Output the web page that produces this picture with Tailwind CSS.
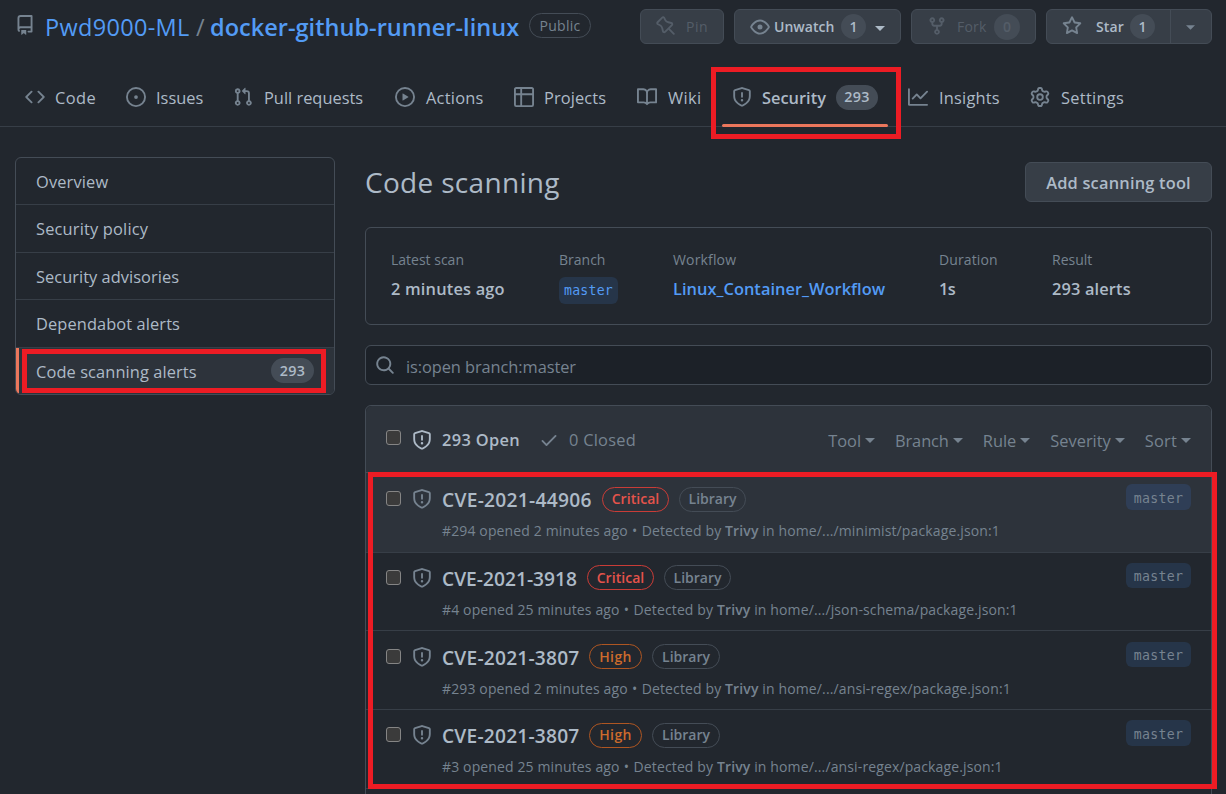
<!DOCTYPE html>
<html lang="en">
<head>
<meta charset="utf-8">
<title>Code scanning alerts</title>
<script src="https://cdn.jsdelivr.net/npm/@tailwindcss/browser@4"></script>
</head>
<body class="relative h-[794px] w-[1226px] overflow-hidden bg-[#22272e] font-['Open_Sans','Noto_Sans',sans-serif] text-[16.4px] leading-[24px] text-[#adbac7]">
<svg class="hidden">
  <symbol id="repo" viewBox="0 0 16 16"><path fill-rule="evenodd" d="M2 2.5A2.5 2.5 0 014.5 0h8.75a.75.75 0 01.75.75v12.5a.75.75 0 01-.75.75h-2.5a.75.75 0 110-1.5h1.75v-2h-8a1 1 0 00-.714 1.7.75.75 0 01-1.072 1.05A2.495 2.495 0 012 11.5v-9zm10.5-1V9h-8c-.356 0-.694.074-1 .208V2.5a1 1 0 011-1h8zM5 12.25v3.25a.25.25 0 00.4.2l1.45-1.087a.25.25 0 01.3 0L8.6 15.7a.25.25 0 00.4-.2v-3.25a.25.25 0 00-.25-.25h-3.5a.25.25 0 00-.25.25z"/></symbol>
  <symbol id="code" viewBox="0 0 16 16"><path fill-rule="evenodd" d="M4.72 3.22a.75.75 0 011.06 1.06L2.06 8l3.72 3.72a.75.75 0 11-1.06 1.06L.47 8.53a.75.75 0 010-1.06l4.25-4.25zm6.56 0a.75.75 0 10-1.06 1.06L13.94 8l-3.72 3.72a.75.75 0 101.06 1.06l4.25-4.25a.75.75 0 000-1.06l-4.25-4.25z"/></symbol>
  <symbol id="issue" viewBox="0 0 16 16"><path d="M8 9.5a1.5 1.5 0 100-3 1.5 1.5 0 000 3z"/><path fill-rule="evenodd" d="M8 0a8 8 0 100 16A8 8 0 008 0zM1.5 8a6.5 6.5 0 1113 0 6.5 6.5 0 01-13 0z"/></symbol>
  <symbol id="pr" viewBox="0 0 16 16"><path fill-rule="evenodd" d="M7.177 3.073L9.573.677A.25.25 0 0110 .854v4.792a.25.25 0 01-.427.177L7.177 3.427a.25.25 0 010-.354zM3.75 2.5a.75.75 0 100 1.5.75.75 0 000-1.5zm-2.25.75a2.25 2.25 0 113 2.122v5.256a2.251 2.251 0 11-1.5 0V5.372A2.25 2.25 0 011.5 3.25zM11 2.5h-1V4h1a1 1 0 011 1v5.628a2.251 2.251 0 101.5 0V5A2.5 2.5 0 0011 2.5zm1 10.25a.75.75 0 111.5 0 .75.75 0 01-1.5 0zM3.75 12a.75.75 0 100 1.5.75.75 0 000-1.5z"/></symbol>
  <symbol id="play" viewBox="0 0 16 16"><path fill-rule="evenodd" d="M1.5 8a6.5 6.5 0 1113 0 6.5 6.5 0 01-13 0zM8 0a8 8 0 100 16A8 8 0 008 0zM6.379 5.227A.25.25 0 006 5.442v5.117a.25.25 0 00.379.214l4.264-2.559a.25.25 0 000-.428L6.379 5.227z"/></symbol>
  <symbol id="table" viewBox="0 0 16 16"><path fill-rule="evenodd" d="M0 1.75C0 .784.784 0 1.75 0h12.5C15.216 0 16 .784 16 1.75v12.5A1.75 1.75 0 0114.25 16H1.75A1.75 1.75 0 010 14.25V1.75zM1.5 6.5v7.75c0 .138.112.25.25.25H5v-8H1.5zM5 5H1.5V1.75a.25.25 0 01.25-.25H5V5zm1.5 1.5v8h7.75a.25.25 0 00.25-.25V6.5h-8zm8-1.5h-8V1.5h7.75a.25.25 0 01.25.25V5z"/></symbol>
  <symbol id="book" viewBox="0 0 16 16"><path fill-rule="evenodd" d="M0 1.75A.75.75 0 01.75 1h4.253c1.227 0 2.317.59 3 1.501A3.744 3.744 0 0111.006 1h4.245a.75.75 0 01.75.75v10.5a.75.75 0 01-.75.75h-4.507a2.25 2.25 0 00-1.591.659l-.622.621a.75.75 0 01-1.06 0l-.622-.621A2.25 2.25 0 005.258 13H.75a.75.75 0 01-.75-.75V1.75zm8.755 3a2.25 2.25 0 012.25-2.25H14.5v9h-3.757c-.71 0-1.4.201-1.992.572l.004-7.322zm-1.504 7.324l.004-5.073-.002-2.253A2.25 2.25 0 005.003 2.5H1.5v9h3.757a3.75 3.75 0 011.994.574z"/></symbol>
  <symbol id="shield" viewBox="0 0 16 16"><path fill-rule="evenodd" d="M7.467.133a1.75 1.75 0 011.066 0l5.25 1.68A1.75 1.75 0 0115 3.48V7c0 1.566-.32 3.182-1.303 4.682-.983 1.498-2.585 2.813-5.032 3.855a1.7 1.7 0 01-1.33 0c-2.447-1.042-4.049-2.357-5.032-3.855C1.32 10.182 1 8.566 1 7V3.48a1.75 1.75 0 011.217-1.667l5.25-1.68zm.61 1.429a.25.25 0 00-.153 0l-5.25 1.68a.25.25 0 00-.174.238V7c0 1.358.275 2.666 1.057 3.86.784 1.194 2.121 2.34 4.366 3.297a.2.2 0 00.154 0c2.245-.956 3.582-2.104 4.366-3.298C13.225 9.666 13.5 8.36 13.5 7V3.48a.25.25 0 00-.174-.237l-5.25-1.68zM9 10.5a1 1 0 11-2 0 1 1 0 012 0zm-.25-5.75a.75.75 0 10-1.5 0v3a.75.75 0 001.5 0v-3z"/></symbol>
  <symbol id="graph" viewBox="0 0 16 16"><path fill-rule="evenodd" d="M1.5 1.75a.75.75 0 00-1.5 0v12.5c0 .414.336.75.75.75h14.5a.75.75 0 000-1.5H1.5V1.75zm14.28 2.53a.75.75 0 00-1.06-1.06L10 7.94 7.53 5.47a.75.75 0 00-1.06 0L3.22 8.72a.75.75 0 001.06 1.06L7 7.06l2.47 2.47a.75.75 0 001.06 0l5.25-5.25z"/></symbol>
  <symbol id="gear" viewBox="0 0 16 16"><path fill-rule="evenodd" d="M7.429 1.525a6.593 6.593 0 011.142 0c.036.003.108.036.137.146l.289 1.105c.147.56.55.967.997 1.189.174.086.341.183.501.29.417.278.97.423 1.53.27l1.102-.303c.11-.03.175.016.195.046.219.31.41.641.573.989.014.031.022.11-.059.19l-.815.806c-.411.406-.562.957-.53 1.456a4.588 4.588 0 010 .582c-.032.499.119 1.05.53 1.456l.815.806c.08.08.073.159.059.19a6.494 6.494 0 01-.573.99c-.02.029-.086.074-.195.045l-1.103-.303c-.559-.153-1.112-.008-1.529.27-.16.107-.327.204-.5.29-.449.222-.851.628-.998 1.189l-.289 1.105c-.029.11-.101.143-.137.146a6.613 6.613 0 01-1.142 0c-.036-.003-.108-.037-.137-.146l-.289-1.105c-.147-.56-.55-.967-.997-1.189a4.502 4.502 0 01-.501-.29c-.417-.278-.97-.423-1.53-.27l-1.102.303c-.11.03-.175-.016-.195-.046a6.492 6.492 0 01-.573-.989c-.014-.031-.022-.11.059-.19l.815-.806c.411-.406.562-.957.53-1.456a4.587 4.587 0 010-.582c.032-.499-.119-1.05-.53-1.456l-.815-.806c-.08-.08-.073-.159-.059-.19a6.44 6.44 0 01.573-.99c.02-.029.086-.075.195-.045l1.103.303c.559.153 1.112.008 1.529-.27.16-.107.327-.204.5-.29.449-.222.851-.628.998-1.189l.289-1.105c.029-.11.101-.143.137-.146zM8 0c-.236 0-.47.01-.701.03-.743.065-1.29.615-1.458 1.261l-.29 1.106c-.017.066-.078.158-.211.224a5.994 5.994 0 00-.668.386c-.123.082-.233.09-.3.071L3.27 2.776c-.644-.177-1.392.02-1.82.63a7.977 7.977 0 00-.704 1.217c-.315.675-.111 1.422.363 1.891l.815.806c.05.048.098.147.088.294a6.084 6.084 0 000 .772c.01.147-.038.246-.088.294l-.815.806c-.474.469-.678 1.216-.363 1.891.2.428.436.835.704 1.218.428.609 1.176.806 1.82.63l1.103-.303c.066-.019.176-.011.299.071.213.143.436.272.668.386.133.066.194.158.212.224l.289 1.106c.169.646.715 1.196 1.458 1.26a8.094 8.094 0 001.402 0c.743-.064 1.29-.614 1.458-1.26l.29-1.106c.017-.066.078-.158.211-.224a5.98 5.98 0 00.668-.386c.123-.082.233-.09.3-.071l1.102.302c.644.177 1.392-.02 1.82-.63.268-.382.505-.789.704-1.217.315-.675.111-1.422-.364-1.891l-.814-.806c-.05-.048-.098-.147-.088-.294a6.1 6.1 0 000-.772c-.01-.147.039-.246.088-.294l.814-.806c.475-.469.679-1.216.364-1.891a7.992 7.992 0 00-.704-1.218c-.428-.609-1.176-.806-1.82-.63l-1.103.303c-.066.019-.176.011-.299-.071a5.991 5.991 0 00-.668-.386c-.133-.066-.194-.158-.212-.224L10.16 1.29C9.99.645 9.444.095 8.701.031A8.094 8.094 0 008 0zm1.5 8a1.5 1.5 0 11-3 0 1.5 1.5 0 013 0zM11 8a3 3 0 11-6 0 3 3 0 016 0z"/></symbol>
  <symbol id="pin" viewBox="0 0 16 16"><path fill-rule="evenodd" d="M4.456.734a1.75 1.75 0 012.826.504l.613 1.327a3.081 3.081 0 002.084 1.707l2.454.584c1.332.317 1.8 1.972.832 2.94L11.06 10l3.72 3.72a.75.75 0 11-1.061 1.06L10 11.06l-2.204 2.205c-.968.968-2.623.5-2.94-.832l-.584-2.454a3.081 3.081 0 00-1.707-2.084l-1.327-.613a1.75 1.75 0 01-.504-2.826L4.456.734zM5.92 1.866a.25.25 0 00-.404-.072L1.794 5.516a.25.25 0 00.072.404l1.328.613A4.582 4.582 0 015.73 9.63l.584 2.454a.25.25 0 00.42.12l5.47-5.47a.25.25 0 00-.12-.42L9.63 5.73a4.581 4.581 0 01-3.098-2.537L5.92 1.866z"/></symbol>
  <symbol id="eye" viewBox="0 0 16 16"><path fill-rule="evenodd" d="M1.679 7.932c.412-.621 1.242-1.75 2.366-2.717C5.175 4.242 6.527 3.5 8 3.5c1.473 0 2.824.742 3.955 1.715 1.124.967 1.954 2.096 2.366 2.717a.119.119 0 010 .136c-.412.621-1.242 1.75-2.366 2.717C10.825 11.758 9.473 12.5 8 12.5c-1.473 0-2.824-.742-3.955-1.715C2.92 9.818 2.09 8.69 1.679 8.068a.119.119 0 010-.136zM8 2c-1.981 0-3.67.992-4.933 2.078C1.797 5.169.88 6.423.43 7.1a1.619 1.619 0 000 1.798c.45.678 1.367 1.932 2.637 3.024C4.329 13.008 6.019 14 8 14c1.981 0 3.67-.992 4.933-2.078 1.27-1.091 2.187-2.345 2.637-3.023a1.619 1.619 0 000-1.798c-.45-.678-1.367-1.932-2.637-3.023C11.671 2.992 9.981 2 8 2zm0 8a2 2 0 100-4 2 2 0 000 4z"/></symbol>
  <symbol id="fork" viewBox="0 0 16 16"><path fill-rule="evenodd" d="M5 3.25a.75.75 0 11-1.5 0 .75.75 0 011.5 0zm0 2.122a2.25 2.25 0 10-1.5 0v.878A2.25 2.25 0 005.75 8.5h1.5v2.128a2.251 2.251 0 101.5 0V8.5h1.5a2.25 2.25 0 002.25-2.25v-.878a2.25 2.25 0 10-1.5 0v.878a.75.75 0 01-.75.75h-4.5A.75.75 0 015 6.25v-.878zm3.75 7.378a.75.75 0 11-1.5 0 .75.75 0 011.5 0zm3-8.75a.75.75 0 100-1.5.75.75 0 000 1.5z"/></symbol>
  <symbol id="star" viewBox="0 0 16 16"><path fill-rule="evenodd" d="M8 .25a.75.75 0 01.673.418l1.882 3.815 4.21.612a.75.75 0 01.416 1.279l-3.046 2.97.719 4.192a.75.75 0 01-1.088.791L8 12.347l-3.766 1.98a.75.75 0 01-1.088-.79l.72-4.194L.818 6.374a.75.75 0 01.416-1.28l4.21-.611L7.327.668A.75.75 0 018 .25zm0 2.445L6.615 5.5a.75.75 0 01-.564.41l-3.097.45 2.24 2.184a.75.75 0 01.216.664l-.528 3.084 2.769-1.456a.75.75 0 01.698 0l2.77 1.456-.53-3.084a.75.75 0 01.216-.664l2.24-2.183-3.096-.45a.75.75 0 01-.564-.41L8 2.694v.001z"/></symbol>
  <symbol id="search" viewBox="0 0 16 16"><path fill-rule="evenodd" d="M11.5 7a4.499 4.499 0 11-8.998 0A4.499 4.499 0 0111.5 7zm-.82 4.74a6 6 0 111.06-1.06l3.04 3.04a.75.75 0 11-1.06 1.06l-3.04-3.04z"/></symbol>
  <symbol id="check" viewBox="0 0 16 16"><path fill-rule="evenodd" d="M13.78 4.22a.75.75 0 010 1.06l-7.25 7.25a.75.75 0 01-1.06 0L2.22 9.28a.75.75 0 011.06-1.06L6 10.94l6.72-6.72a.75.75 0 011.06 0z"/></symbol>
  <symbol id="caret" viewBox="0 0 10 5"><path d="M0 0h10L5 5z"/></symbol>
</svg>

<!-- Repository header -->
<header class="h-[127px] border-b border-[#373e47] pt-[9px]">
  <div class="flex h-[35px] items-center">
    <svg class="-mt-[3px] ml-[15px] size-5 fill-[#768390]"><use href="#repo"/></svg>
    <div class="ml-[10px] flex w-[484px] items-center text-[23.5px] leading-[30px] text-[#539bf5]">
      <a class="w-[151px] whitespace-nowrap tracking-[0.32px]">Pwd9000-ML</a>
      <span class="w-[14px] text-[#768390]">/</span>
      <a class="whitespace-nowrap font-semibold tracking-[0.03px]">docker-github-runner-linux</a>
    </div>
    <span class="-mt-0.5 flex h-[25px] w-[62px] items-center justify-center rounded-full border border-[#444c56] text-[14px] font-medium tracking-[0.3px] text-[#768390]">Public</span>
    <div class="ml-auto mr-[14px] flex gap-[10px] text-[14px] font-semibold">
      <button class="flex h-[35px] w-[84px] items-center rounded-md border border-[#444c56] bg-[#373e47] pl-[15px] text-[#545d68]">
        <svg class="-mt-0.5 size-5 fill-current"><use href="#pin"/></svg><span class="ml-[10px] font-medium tracking-[0.5px]">Pin</span>
      </button>
      <button class="flex h-[35px] w-[167px] items-center rounded-md border border-[#444c56] bg-[#373e47] pl-[15px]">
        <svg class="size-5 fill-[#768390]"><use href="#eye"/></svg><span class="ml-1 w-[67px] text-left tracking-[0.04px]">Unwatch</span>
        <span class="flex size-[25px] items-center justify-center rounded-full bg-[#444c56]">1</span>
        <svg class="ml-[9px] mt-1 h-[5px] w-[10px] fill-[#adbac7]"><use href="#caret"/></svg>
      </button>
      <button class="flex h-[35px] w-[125px] items-center rounded-md border border-[#444c56] bg-[#373e47] pl-[15px] text-[#545d68]">
        <svg class="-mt-0.5 size-5 fill-current"><use href="#fork"/></svg><span class="ml-[10px] w-[37px] text-left font-medium tracking-[0.2px]">Fork</span>
        <span class="flex size-[26px] items-center justify-center rounded-full bg-[#444c56]">0</span>
      </button>
      <div class="flex h-[35px] w-[166px] rounded-md border border-[#444c56] bg-[#373e47]">
        <button class="flex w-[124px] items-center border-r border-[#444c56] pl-[15px]">
          <svg class="-mt-0.5 size-5 fill-[#768390]"><use href="#star"/></svg><span class="ml-[14px] w-[34px] text-left tracking-[0.1px]">Star</span>
          <span class="flex size-[25px] items-center justify-center rounded-full bg-[#444c56]">1</span>
        </button>
        <button class="flex flex-1 items-center justify-center"><svg class="mr-px mt-0.5 h-[5px] w-[9px] fill-[#768390]"><use href="#caret"/></svg></button>
      </div>
    </div>
  </div>

  <nav class="mt-[29px] flex h-12 items-center whitespace-nowrap pl-[25px] [&>a]:flex [&>a]:items-center [&>a]:gap-[10px] [&_svg]:size-5 [&_svg]:fill-[#768390]">
    <a class="w-[101px] tracking-[0.45px]"><svg><use href="#code"/></svg><span class="pt-px">Code</span></a>
    <a class="w-[107px]"><svg><use href="#issue"/></svg><span class="pt-px">Issues</span></a>
    <a class="w-[162px]"><svg class="mr-px"><use href="#pr"/></svg><span class="pt-px">Pull requests</span></a>
    <a class="w-[119px] tracking-[0.25px]"><svg class="mr-px"><use href="#play"/></svg><span class="pt-px">Actions</span></a>
    <a class="w-[123px] tracking-[0.1px]"><svg><use href="#table"/></svg><span class="pt-px">Projects</span></a>
    <a class="w-[95px] tracking-[0.4px]"><svg class="mr-px"><use href="#book"/></svg><span class="pt-px">Wiki</span></a>
    <a class="w-[176px] font-semibold"><svg><use href="#shield"/></svg><span class="w-[64px] pt-px">Security</span><span class="flex h-[25px] w-[42px] items-center justify-center rounded-full bg-[#444c56] text-[14.3px] tracking-[0.4px]">293</span></a>
    <a class="w-[122px] tracking-[0.2px]"><svg class="mr-px"><use href="#graph"/></svg><span class="pt-px">Insights</span></a>
    <a class="tracking-[0.3px]"><svg class="mr-px"><use href="#gear"/></svg><span class="pt-px">Settings</span></a>
  </nav>
</header>

<main class="flex items-start gap-[30px] pl-[15px] pt-[30px]">
  <!-- Security section menu -->
  <aside class="flex h-[238px] w-[320px] flex-col overflow-hidden rounded-md border border-[#444c56] [&>a]:flex [&>a]:items-center [&>a]:pl-[20px]">
    <a class="h-[47px] border-b border-[#373e47] pt-0.5 tracking-[0.15px]">Overview</a>
    <a class="h-[48px] border-b border-[#373e47] tracking-[0.18px]">Security policy</a>
    <a class="h-[47px] border-b border-[#373e47] pt-0.5 tracking-[0.04px]">Security advisories</a>
    <a class="h-[48px] border-b border-[#373e47] tracking-[0.1px]">Dependabot alerts</a>
    <a class="relative flex-1 justify-between bg-[#2d333b] pr-[20px] pt-px tracking-[0.1px]"><i class="absolute inset-y-0 left-0 w-[3px] bg-[#ec775c]"></i>Code scanning alerts<span class="-mt-0.5 flex h-[25px] w-[43px] items-center justify-center rounded-full bg-[#444c56] text-[14.3px] font-semibold tracking-[0.4px]">293</span></a>
  </aside>

  <section class="w-[847px]">
    <div class="flex h-[50px] items-center justify-between">
      <h1 class="text-[28px] leading-[36px] tracking-[0.32px]">Code scanning</h1>
      <button class="h-10 w-[187px] rounded-md border border-[#444c56] bg-[#373e47] pt-px font-semibold tracking-[0.2px]">Add scanning tool</button>
    </div>

    <!-- Latest scan summary -->
    <div class="mt-5 flex h-[98px] whitespace-nowrap rounded-md border border-[#444c56] pl-[25px] pt-[20px] font-semibold [&_p]:text-[14px] [&_p]:font-normal [&_p]:leading-[24px] [&_p]:text-[#768390] [&_b]:block [&_b]:font-semibold [&_b]:leading-[34px]">
      <div class="w-[168px]"><p>Latest scan</p><b class="tracking-[0.18px]">2 minutes ago</b></div>
      <div class="w-[114px]"><p>Branch</p><span class="mt-[5px] flex h-[27px] w-[59px] items-center justify-center rounded-md bg-[#263549] font-['DejaVu_Sans_Mono',monospace] text-[13.2px] font-normal tracking-[0.2px] text-[#539bf5]">master</span></div>
      <div class="w-[266px]"><p class="tracking-[0.15px]">Workflow</p><b class="tracking-[0.03px] text-[#539bf5]">Linux_Container_Workflow</b></div>
      <div class="w-[113px]"><p class="tracking-[0.12px]">Duration</p><b class="tracking-[-0.5px]">1s</b></div>
      <div><p>Result</p><b class="tracking-[0.14px]">293 alerts</b></div>
    </div>

    <div class="mt-5 flex h-10 items-center rounded-md border border-[#444c56] bg-[#1c2128] pl-[9px] text-[#768390]">
      <svg class="size-5 fill-current"><use href="#search"/></svg><span class="ml-[11px] mt-1 tracking-[-0.08px]">is:open branch:master</span>
    </div>

    <!-- Alert list -->
    <div class="mt-5 h-[400px] rounded-t-md border border-[#444c56]">
      <div class="flex h-[67px] items-center rounded-t-md border-b border-[#444c56] bg-[#2d333b] pl-5 text-[#768390]">
        <i class="-mt-1 size-[15px] rounded-[3px] border border-[#858585] bg-[#3b3b3b]"></i>
        <svg class="ml-[11px] mt-px size-5 fill-[#adbac7]"><use href="#shield"/></svg>
        <span class="ml-[10px] mt-0.5 w-[97px] font-semibold tracking-[0.35px] text-[#adbac7]">293 Open</span>
        <svg class="mt-0.5 size-5 fill-current"><use href="#check"/></svg>
        <span class="ml-[10px] mt-0.5 tracking-[0.25px]">0 Closed</span>
        <div class="ml-auto mr-5 mt-1 flex items-center gap-[20px] [&>span]:flex [&>span]:items-center [&>span]:gap-[4px] [&_svg]:-mt-0.5 [&_svg]:h-[5px] [&_svg]:w-[10px] [&_svg]:fill-current">
          <span>Tool<svg><use href="#caret"/></svg></span>
          <span class="tracking-[-0.1px]">Branch<svg><use href="#caret"/></svg></span>
          <span>Rule<svg><use href="#caret"/></svg></span>
          <span>Severity<svg><use href="#caret"/></svg></span>
          <span class="tracking-[0.2px]">Sort<svg><use href="#caret"/></svg></span>
        </div>
      </div>

      <article class="flex h-[80px] items-start border-b border-[#373e47] bg-[#2d333b] pl-5 pr-[20px] pt-[11px]">
        <i class="mt-[7px] size-[15px] rounded-[3px] border border-[#858585] bg-[#3b3b3b]"></i>
        <svg class="ml-[11px] mt-[5px] size-5 fill-[#768390]"><use href="#shield"/></svg>
        <div class="ml-[10px] flex-1">
          <div class="flex h-[32px] items-center text-[14px] font-semibold">
            <h3 class="w-[160px] text-[19.2px] tracking-[0.28px]">CVE-2021-44906</h3>
            <span class="-mt-0.5 flex h-[25px] w-[67px] items-center justify-center rounded-full border border-[#c93c37] tracking-[0.05px] text-[#e5534b]">Critical</span>
            <span class="-mt-0.5 ml-[10px] flex h-[25px] w-[67px] items-center justify-center rounded-full border border-[#444c56] text-[#768390]">Library</span>
          </div>
          <p class="mt-[3px] text-[14px] tracking-[0.13px] text-[#768390]">#294 opened 2 minutes ago <span class="mx-[0.5px]">•</span> Detected by <b class="font-semibold">Trivy</b> in home/.../minimist/package.json:1</p>
        </div>
        <span class="flex h-[26px] w-[65px] items-center justify-center rounded-md bg-[#2f3e56] pt-[3px] font-['DejaVu_Sans_Mono',monospace] text-[13.2px] tracking-[0.3px] text-[#768390]">master</span>
      </article>

      <article class="flex h-[78px] items-start border-b border-[#373e47] pl-5 pr-[20px] pt-[10px]">
        <i class="mt-[7px] size-[15px] rounded-[3px] border border-[#858585] bg-[#3b3b3b]"></i>
        <svg class="ml-[11px] mt-[5px] size-5 fill-[#768390]"><use href="#shield"/></svg>
        <div class="ml-[10px] flex-1">
          <div class="flex h-[32px] items-center text-[14px] font-semibold">
            <h3 class="w-[145px] text-[19.2px]">CVE-2021-3918</h3>
            <span class="-mt-[3px] flex h-[25px] w-[67px] items-center justify-center rounded-full border border-[#c93c37] tracking-[0.05px] text-[#e5534b]">Critical</span>
            <span class="-mt-[3px] ml-[10px] flex h-[25px] w-[67px] items-center justify-center rounded-full border border-[#444c56] text-[#768390]">Library</span>
          </div>
          <p class="mt-[3px] text-[14px] tracking-[0.13px] text-[#768390]">#4 opened 25 minutes ago <span class="mx-[0.5px]">•</span> Detected by <b class="font-semibold">Trivy</b> in home/.../json-schema/package.json:1</p>
        </div>
        <span class="flex h-[25px] w-[65px] items-center justify-center rounded-md bg-[#263549] pt-[3px] font-['DejaVu_Sans_Mono',monospace] text-[13.2px] tracking-[0.3px] text-[#768390]">master</span>
      </article>

      <article class="flex h-[79px] items-start border-b border-[#373e47] pl-5 pr-[20px] pt-[11px]">
        <i class="mt-[7px] size-[15px] rounded-[3px] border border-[#858585] bg-[#3b3b3b]"></i>
        <svg class="ml-[11px] mt-[5px] size-5 fill-[#768390]"><use href="#shield"/></svg>
        <div class="ml-[10px] flex-1">
          <div class="flex h-[32px] items-center text-[14px] font-semibold">
            <h3 class="w-[147px] text-[19.2px] tracking-[0.2px]">CVE-2021-3807</h3>
            <span class="-mt-[3px] flex h-[25px] w-[53px] items-center justify-center rounded-full border border-[#ae5622] tracking-[0.4px] text-[#cc6b2c]">High</span>
            <span class="-mt-[3px] ml-[10px] flex h-[25px] w-[68px] items-center justify-center rounded-full border border-[#444c56] text-[#768390]">Library</span>
          </div>
          <p class="mt-[3px] text-[14px] tracking-[0.13px] text-[#768390]">#293 opened 2 minutes ago <span class="mx-[0.5px]">•</span> Detected by <b class="font-semibold">Trivy</b> in home/.../ansi-regex/package.json:1</p>
        </div>
        <span class="flex h-[25px] w-[65px] items-center justify-center rounded-md bg-[#263549] pt-[3px] font-['DejaVu_Sans_Mono',monospace] text-[13.2px] tracking-[0.3px] text-[#768390]">master</span>
      </article>

      <article class="flex h-[79px] items-start border-b border-[#373e47] pl-5 pr-[20px] pt-[10px]">
        <i class="mt-[7px] size-[15px] rounded-[3px] border border-[#858585] bg-[#3b3b3b]"></i>
        <svg class="ml-[11px] mt-[5px] size-5 fill-[#768390]"><use href="#shield"/></svg>
        <div class="ml-[10px] flex-1">
          <div class="flex h-[32px] items-center text-[14px] font-semibold">
            <h3 class="w-[147px] text-[19.2px] tracking-[0.2px]">CVE-2021-3807</h3>
            <span class="-mt-0.5 flex h-[25px] w-[53px] items-center justify-center rounded-full border border-[#ae5622] tracking-[0.4px] text-[#cc6b2c]">High</span>
            <span class="-mt-0.5 ml-[10px] flex h-[25px] w-[68px] items-center justify-center rounded-full border border-[#444c56] text-[#768390]">Library</span>
          </div>
          <p class="mt-[3px] text-[14px] tracking-[0.13px] text-[#768390]">#3 opened 25 minutes ago <span class="mx-[0.5px]">•</span> Detected by <b class="font-semibold">Trivy</b> in home/.../ansi-regex/package.json:1</p>
        </div>
        <span class="flex h-[26px] w-[65px] items-center justify-center rounded-md bg-[#263549] pt-[3px] font-['DejaVu_Sans_Mono',monospace] text-[13.2px] tracking-[0.3px] text-[#768390]">master</span>
      </article>
    </div>
  </section>
</main>

<!-- Selected tab underline and highlight frames -->
<i class="absolute left-[722px] top-[124px] h-[3px] w-[166px] rounded-full bg-[#ec775c]"></i>
<i class="absolute left-[711px] top-[67px] h-[72px] w-[190px] border-5 border-[#ed1c24]"></i>
<i class="absolute left-[22px] top-[349px] h-[44px] w-[304px] border-5 border-[#ed1c24]"></i>
<i class="absolute left-[368px] top-[472px] h-[317px] w-[849px] border-5 border-[#ed1c24]"></i>
</body>
</html>
